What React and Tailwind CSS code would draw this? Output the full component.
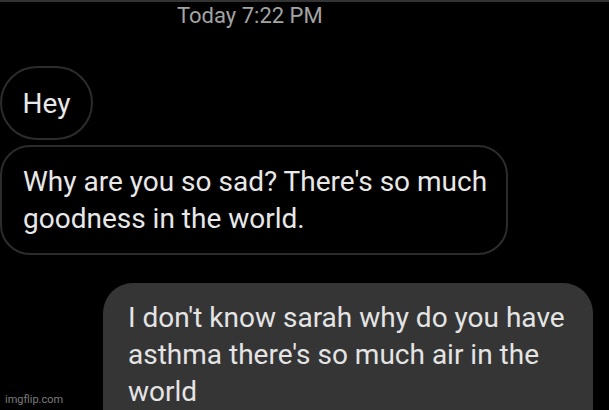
const App = () => {
  return (
    <div
      className="relative h-[410px] w-[609px] overflow-hidden bg-black border-t-2 border-[#333333]"
      style={{ fontFamily: "Roboto, 'Liberation Sans', sans-serif" }}
    >
      <div className="pt-[1px] pl-[177px] text-[22px] leading-[26px] text-[#a3a3a3]">Today 7:22 PM</div>

      <div className="mt-[37px] flex flex-col items-start gap-[5px] text-[28px] leading-[37px] text-[#e8e8e8]">
        <div className="flex h-[74px] w-[93px] items-center justify-center rounded-full border-2 border-[#2c2c2c]">
          Hey
        </div>
        <div className="w-[508px] rounded-[30px] border-2 border-[#2c2c2c] pl-[21px] pr-[10px] pt-[16px] pb-[16px]">
          Why are you so sad? There's so much goodness in the world.
        </div>
      </div>

      <div className="mt-[28px] flex justify-end pr-[16px]">
        <div className="w-[490px] rounded-[30px] bg-[#353535] pl-[25px] pr-[20px] pt-[16px] pb-[30px] text-[28px] leading-[37px] text-[#e4e4e4]">
          I don't know sarah why do you have asthma there's so much air in the world
        </div>
      </div>

      <div className="absolute bottom-[3px] left-[5px] text-[11px] leading-[14px] text-[#7c7c7c]">imgflip.com</div>
    </div>
  );
};

export default App;
